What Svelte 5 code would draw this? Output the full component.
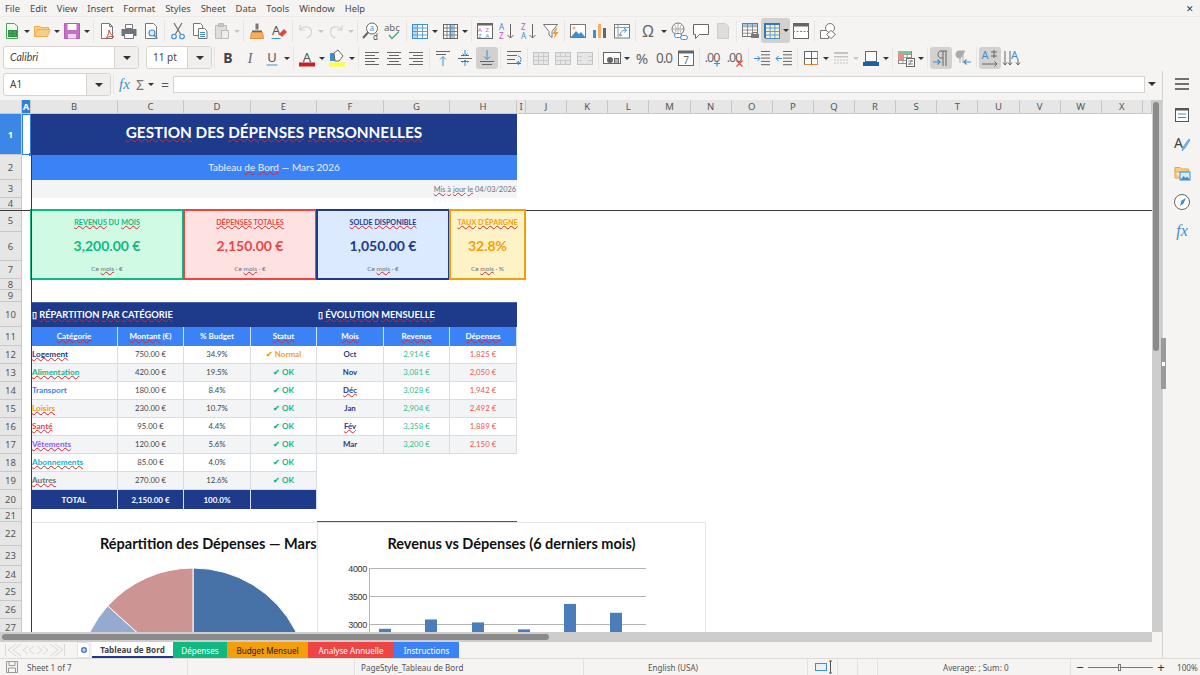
<script>
  const menus = ['File', 'Edit', 'View', 'Insert', 'Format', 'Styles', 'Sheet', 'Data', 'Tools', 'Window', 'Help'];

  const grid = (x, y, w, h, nx, ny, color, fill = '#fff') => {
    let s = `<rect x="${x + .5}" y="${y + .5}" width="${w}" height="${h}" fill="${fill}" stroke="${color}"/><path d="`;
    for (let i = 1; i < nx; i++) s += `M${x + .5 + (w * i) / nx} ${y}v${h}`;
    for (let i = 1; i < ny; i++) s += `M${x} ${y + .5 + (h * i) / ny}h${w}`;
    return s + `" stroke="${color}" stroke-width=".8" fill="none"/>`;
  };
  const lines = (x, y, widths, step, color = '#666') =>
    `<path d="${widths.map((w, i) => `M${x[i] ?? x[0]} ${y + i * step + .5}h${w}`).join('')}" stroke="${color}" fill="none"/>`;
  const label = (x, y, size, fill, t, extra = '') =>
    `<text x="${x}" y="${y}" font-size="${size}" fill="${fill}" font-family="Noto Sans, sans-serif" ${extra}>${t}</text>`;

  const icons = {
    new: `<path d="M5.500 3.500h8l3 3v12h-11z" fill="#f0f8f0" stroke="#46a455"/>${grid(7, 10, 8, 6, 2, 2, '#2f8f46', '#46a455')}`,
    open: `<path d="M3.500 6.500v10h13l2.500-7h-1.500v-2h-7l-1-1z" fill="#f9cd82" stroke="#eeb055"/><path d="M3.500 16.500l2.500-7h13" fill="none" stroke="#eeb055"/>`,
    save: `<path d="M3.500 3.500h15v15h-15z" fill="#c56fc5" stroke="#b25fb2"/><path d="M6.500 4v6h9V4z" fill="#fff"/><path d="M7 14h8v4.500H7z" fill="#efd5ef"/>`,
    pdf: `<path d="M5.500 3.500h8l3 3v12h-11z" fill="#fff" stroke="#777"/><path d="M13.500 3.500v3h3" fill="none" stroke="#777"/><path d="M10 19c2-4 3-6 3-9 1 3 2 5 5 7-3-1-5-1-8 2z" fill="none" stroke="#e0483d"/>`,
    print: `<path d="M7.500 4.500h7v4h-7z" fill="#fff" stroke="#777"/><path d="M3.500 9h15v7h-15z" fill="#69747e"/><path d="M6.500 13.500h9v5h-9z" fill="#fff" stroke="#777"/>`,
    preview: `<path d="M5.500 3.500h8l3 3v12h-11z" fill="#fff" stroke="#777"/><circle cx="12" cy="13" r="3" fill="#dcecf9" stroke="#3d8fd1" stroke-width="1.200"/><path d="M14 15l3.500 3.500" stroke="#3d8fd1" stroke-width="1.500"/>`,
    cut: `<path d="M7 3l6.500 11M15 3L8.500 14" stroke="#666" stroke-width="1.100" fill="none"/><circle cx="7" cy="16.500" r="2.300" fill="none" stroke="#3d8fd1" stroke-width="1.100"/><circle cx="15" cy="16.500" r="2.300" fill="none" stroke="#3d8fd1" stroke-width="1.100"/>`,
    copy: `<path d="M4.500 3.500h7l2 2v10h-9z" fill="#fff" stroke="#777"/><path d="M9.500 8.500h6l2.500 2.500v7.500H9.500z" fill="#fff" stroke="#777"/><path d="M11 12.500h5M11 14.500h5M11 16.500h5" stroke="#3d8fd1"/>`,
    paste: `<path d="M4.500 5.500h11v13h-11z" fill="#ddd" stroke="#bbb"/><path d="M7.500 3.500h5v3h-5z" fill="#c6c6c6" stroke="#bbb"/><path d="M10.500 10.500h7v8h-7z" fill="#eee" stroke="#bbb"/>`,
    clone: `<path d="M9.500 3.500h3v6h-3z" fill="#777"/><path d="M6 10.500h10v2H6z" fill="#666"/><path d="M5.500 12.500h11l1 6h-13z" fill="#f4b063" stroke="#e2903a"/>`,
    clear: `${label(4, 15, 13, '#555', 'A')}<path d="M3.500 18.500h9" stroke="#3d8fd1"/><path d="M11 14l5-5 3 3-5 5z" fill="#e0483d"/>`,
    undo: `<path d="M5 5v5h5M5.500 10c3-5 11-4 11 2 0 3-2 5-5 6" fill="none" stroke="#d2d2d2" stroke-width="1.200"/>`,
    redo: `<path d="M17 5v5h-5M16.500 10c-3-5-11-4-11 2 0 3 2 5 5 6" fill="none" stroke="#d2d2d2" stroke-width="1.200"/>`,
    find: `<circle cx="12" cy="8.500" r="5.500" fill="#fff" stroke="#666"/><path d="M8 12.500l-5 5.500" stroke="#666" stroke-width="2"/>${label(9.500, 11, 8, '#3d8fd1', 'a')}${label(13, 20, 8, '#555', 'd')}`,
    spell: `${label(2, 11, 9.500, '#666', 'abc')}<path d="M7 15l3 3.500 7-7" fill="none" stroke="#46a87a" stroke-width="1.400"/>`,
    rows: `${grid(3, 4, 15, 14, 3, 4, '#3d8fd1')}<path d="M3 4h5v14H3z" fill="#3d8fd1" opacity=".35"/>`,
    cols: `${grid(4, 4, 14, 14, 4, 4, '#666')}<path d="M10 4h4v14h-4z" fill="#3d8fd1" opacity=".5"/>`,
    sort: `<rect x="3.500" y="3.500" width="15" height="15" fill="#fff" stroke="#666"/><path d="M3 3.500h16v2H3z" fill="#666"/>${label(4, 12, 6, '#c05ac0', 'A')}${label(11.500, 12, 6, '#c05ac0', 'Z')}${label(4, 18, 6, '#3d8fd1', 'Z')}${label(11.500, 18, 6, '#3d8fd1', 'A')}`,
    asc: `${label(3, 10, 8, '#3d8fd1', 'A')}${label(3, 19, 8, '#c05ac0', 'Z')}<path d="M14.500 4v14M11.500 15l3 3 3-3" fill="none" stroke="#666"/>`,
    desc: `${label(3, 10, 8, '#c05ac0', 'Z')}${label(3, 19, 8, '#3d8fd1', 'A')}<path d="M14.500 4v14M11.500 15l3 3 3-3" fill="none" stroke="#666"/>`,
    filter: `<path d="M3.500 4.500h14l-5.500 7v6l-3-2.500v-3.500z" fill="#fff" stroke="#777"/><path d="M16 8l-3.500 6h2.500l-1.500 5 5-7h-3l2-4z" fill="#f09a30"/>`,
    image: `<rect x="3.500" y="4.500" width="15" height="13" fill="#fff" stroke="#777"/><path d="M4 17l5-6 3 3 2-2 4 5z" fill="#3d8fd1"/><circle cx="7" cy="8" r="1.500" fill="#f4b063"/>`,
    chart: `<path d="M4 10h3v8H4z" fill="#3d8fd1"/><path d="M9 4h3v14H9z" fill="#f4b063"/><path d="M14 8h3v10h-3z" fill="#666"/>`,
    pivot: `<rect x="3.500" y="4.500" width="15" height="13.500" fill="#fff" stroke="#777"/><path d="M3.500 7.500h15M7 4.500v13.500" stroke="#999"/><path d="M9 15c1-4 3-5 6-5M13 8l2.500 2-2 2.500M9 16l-1-2M9 16l2-1" fill="none" stroke="#3d8fd1"/>`,
    omega: `<text x="10" y="17" font-size="16" fill="#666" font-family="Liberation Sans, sans-serif" text-anchor="middle">Ω</text>`,
    link: `<circle cx="10" cy="9" r="6" fill="#fff" stroke="#777"/><path d="M4 9h12M10 3v12M6.500 4.500c2 3 2 6 0 9M13.500 4.500c-2 3-2 6 0 9" fill="none" stroke="#999" stroke-width=".8"/><rect x="6.500" y="13.500" width="7" height="4" rx="2" fill="#fff" stroke="#3d8fd1"/><rect x="12.500" y="15.500" width="7" height="4" rx="2" fill="#fff" stroke="#3d8fd1"/>`,
    comment: `<path d="M3.500 4.500h15v10h-9l-4 4v-4h-2z" fill="#fff" stroke="#666"/>`,
    hf: `<path d="M5.500 3.500h8l3 3v12h-11z" fill="#ddd" stroke="#ccc"/>`,
    area: `${grid(3, 3, 15, 13, 3, 4, '#777')}<path d="M3 3h15v3H3z" fill="#3d8fd1" opacity=".5"/><path d="M12 14h8v4h-8z" fill="#777"/><path d="M14 12.500h4v2h-4z" fill="#fff" stroke="#777"/>`,
    freeze: `${grid(4, 4, 14, 14, 3, 4, '#3d8fd1', '#f8efd0')}<path d="M3 3h2v15H3zM3 3h16v2H3z" fill="#2b79bf"/>`,
    split: `<rect x="3.500" y="3.500" width="15" height="15" fill="#fff" stroke="#666"/><path d="M3 3.500h16v3H3z" fill="#666"/><path d="M3 11.500h16" stroke="#3d8fd1" stroke-dasharray="2 1.500"/>`,
    shapes: `<path d="M3.500 10.500h8v8h-8z" fill="#fff" stroke="#777"/><circle cx="13" cy="8" r="4.500" fill="#fff" stroke="#777"/><path d="M14 10.500l4.500 4-4.500 4-4.500-4z" fill="#fff" stroke="#777"/>`,
    bold: label(11, 16, 14, '#444', 'B', 'text-anchor="middle" font-weight="700"'),
    italic: `<text x="11" y="16" font-size="14" fill="#666" font-family="Liberation Serif, serif" font-style="italic" text-anchor="middle">I</text>`,
    under: `${label(11, 15, 13, '#555', 'U', 'text-anchor="middle"')}<path d="M5.500 18h11" stroke="#7db4e6" stroke-width="1.500"/>`,
    fcolor: `${label(11, 14.500, 13, '#555', 'A', 'text-anchor="middle"')}<path d="M3 15.500h16v4H3z" fill="#c9211e"/>`,
    hcolor: `<path d="M3 15.500h16v4H3z" fill="#ffff38"/><path d="M4 6h9v8H4z" fill="#3d8fd1"/><path d="M8 6l4-3 5 6-4 5H9z" fill="#fff" stroke="#666"/>`,
    left: lines([4], 5, [14, 10, 14, 10, 14], 3),
    center: lines([4, 6, 4, 6, 4], 5, [14, 10, 14, 10, 14], 3),
    right: lines([4, 8, 4, 8, 4], 5, [14, 10, 14, 10, 14], 3),
    top: `${lines([4], 4, [14, 10], 3)}<path d="M11 19v-9M8 12.500l3-3 3 3" fill="none" stroke="#3d8fd1"/>`,
    vcenter: `<path d="M4 11.500h14" stroke="#666"/><path d="M7 8.500h8M7 14.500h8" stroke="#666"/><path d="M11 3v6M8.500 6.500l2.500 2.500 2.500-2.500M11 19v-6M8.500 15.500l2.500-2.500 2.500 2.500" fill="none" stroke="#3d8fd1"/>`,
    bottom: `${lines([4, 6], 14, [14, 10], 3)}<path d="M11 3v9M8 9.500l3 3 3-3" fill="none" stroke="#3d8fd1"/>`,
    wrap: `${lines([4], 4, [14, 10, 8, 14], 4)}<path d="M15 9c4 0 4 7 0 7h-1M16 14l-2.500 2 2.500 2" fill="none" stroke="#3d8fd1"/>`,
    m1: grid(3, 5, 15, 12, 3, 3, '#c4c4c4', '#e6e6e6'),
    m2: `${grid(3, 5, 15, 12, 3, 3, '#c4c4c4', '#e6e6e6')}<path d="M4 10h14v3H4z" fill="#e6e6e6"/>`,
    m3: `${grid(3, 5, 15, 12, 3, 3, '#c4c4c4', '#e6e6e6')}<path d="M8 6h6v10H8z" fill="#e6e6e6"/>`,
    money: `<rect x="2.500" y="5.500" width="17" height="11" fill="#fff" stroke="#666"/><circle cx="9" cy="13" r="3" fill="#666"/><path d="M13 11h5v6h-5z" fill="#666"/><path d="M14 13h3M14 15h3" stroke="#fff"/>`,
    pct: label(11, 16.500, 15, '#666', '%', 'text-anchor="middle"'),
    num: label(11, 16, 13.500, '#666', '0.0', 'text-anchor="middle" letter-spacing="-1"'),
    date: `<rect x="3.500" y="4.500" width="15" height="14" fill="#fff" stroke="#666"/><path d="M3 3.500h16v3H3z" fill="#666"/>${label(11, 17, 10, '#666', '7', 'text-anchor="middle"')}`,
    adddec: `${label(10, 15, 12.500, '#666', '.00', 'text-anchor="middle" letter-spacing="-1"')}<path d="M15 13.500v6M12 16.500h6" stroke="#3d8fd1" stroke-width="1.200"/>`,
    deldec: `${label(10, 15, 12.500, '#666', '.00', 'text-anchor="middle" letter-spacing="-1"')}<path d="M12.500 13.500l6 6M18.500 13.500l-6 6" stroke="#e0483d" stroke-width="1.200"/>`,
    indent: `${lines([10], 4, [9, 9, 9, 9, 9], 3.300)}<path d="M3 11.500h6M6.500 9l2.500 2.500-2.500 2.500" fill="none" stroke="#3d8fd1"/>`,
    outdent: `${lines([10], 4, [9, 9, 9, 9, 9], 3.300)}<path d="M9 11.500H3M5.500 9L3 11.500 5.500 14" fill="none" stroke="#3d8fd1"/>`,
    borders: `<rect x="4.500" y="4.500" width="13" height="13" fill="#fff" stroke="#e08a2e"/><path d="M11.500 4v14M4 11.500h14" stroke="#666"/><path d="M4.500 4.500h13M4.500 4.500v13" stroke="#666" fill="none"/>`,
    bstyle: `<path d="M4 5h14v2H4zM4 9h14v1.500H4z" fill="#c4c4c4"/><path d="M4 13h14M4 16h14" stroke="#c4c4c4" stroke-dasharray="2 1"/>`,
    bcolor: `<rect x="5.500" y="4.500" width="11" height="10" fill="#fff" stroke="#666"/><path d="M3 15h16v4H3z" fill="#1f5f9e"/>`,
    cond: `${grid(3, 4, 13, 12, 3, 4, '#888')}<path d="M3 4h13v3H3z" fill="#7cc68a"/><path d="M3 7h6v6H3z" fill="#e98d88"/><rect x="11.500" y="11.500" width="8" height="8" fill="#fff" stroke="#666"/><path d="M13 14h5M13 17h5M17 13l-3 5" stroke="#666" stroke-width=".8"/>`,
    ltr: `<path d="M13 4v15M16 4v15" stroke="#666"/><path d="M17 4h-6c-4 0-4 7 0 7h2" fill="none" stroke="#666"/><path d="M3 15h7M7.500 12.500L10 15l-2.500 2.500" fill="none" stroke="#3d8fd1" stroke-width="1.200"/>`,
    rtl: `<path d="M8 4v12M11 4v12" stroke="#aaa"/><path d="M13 4H7c-4 0-4 7 0 7h2" fill="#aaa" stroke="#aaa"/><path d="M19 15h-7M14.500 12.500L12 15l2.500 2.500" fill="none" stroke="#3d8fd1" stroke-width="1.200"/>`,
    horiz: `${label(2.500, 12, 11, '#3d8fd1', 'A')}<path d="M12 5h6M12 9h6M15 3v8" stroke="#666"/><path d="M3 17h15M15.500 14.500L18 17l-2.500 2.500" fill="none" stroke="#666"/>`,
    vert: `${label(10, 12, 11, '#3d8fd1', 'A')}<path d="M4 4v14M9 4v14M17 12v6M2 15.500L4 18l2-2.500M7 15.500L9 18l2-2.500M15 15.500l2 2.500 2-2.500" fill="none" stroke="#666"/>`
  };

  const bar1 = ['new', '>', 'open', '>', 'save', '>', '|', 'pdf', 'print', 'preview', '|', 'cut', 'copy', 'paste', '-', '|', 'clone', 'clear', '|', 'undo', '-', 'redo', '-', '|', 'find', 'spell', '|', 'rows', '>', 'cols', '>', '|', 'sort', 'asc', 'desc', 'filter', '|', 'image', 'chart', 'pivot', '|', 'omega', '>', 'link', 'comment', 'hf', '|', 'area', 'freeze*', '>*', 'split', '|', 'shapes'];
  const bar2 = ['bold', 'italic', 'under', '>', '|', 'fcolor', '>', 'hcolor', '>', '|', 'left', 'center', 'right', '|', 'top', 'vcenter', 'bottom*', '|', 'wrap', '|', 'm1', 'm2', 'm3', '|', 'money', '>', 'pct', 'num', 'date', '|', 'adddec', 'deldec', '|', 'indent', 'outdent', '|', 'borders', '>', 'bstyle', '-', 'bcolor', '>', '|', 'cond', '>', '|', 'ltr*', 'rtl', '|', 'horiz*', 'vert'];

  const side = {
    menu: `<path d="M4 6h14M4 11h14M4 16h14" stroke="#444" stroke-width="1.500"/>`,
    props: `<rect x="4.500" y="4.500" width="13" height="13" fill="#fff" stroke="#555"/><path d="M4 4.500h14v2H4z" fill="#555"/><path d="M7 10h8M7 13.500h8" stroke="#3d8fd1"/>`,
    styles: `${label(3, 15, 14, '#444', 'A')}<path d="M12 14l6-8 1 1-5 8-3 3z" fill="#7db4e6" stroke="#3d8fd1" stroke-width=".6"/>`,
    gallery: `<path d="M4 5.500h5l1.500 1.500h7v3H4z" fill="#f9cd82" stroke="#e8a33d"/><path d="M4 8v8h5" fill="#f9cd82" stroke="#e8a33d"/><rect x="9" y="10" width="10" height="8" fill="#dbe9f6" stroke="#3d8fd1"/><path d="M9.500 18l3-4 2 2 1.500-1.500 3 3.500z" fill="#3d8fd1"/>`,
    nav: `<circle cx="11" cy="11" r="7.500" fill="#fff" stroke="#666"/><path d="M15 7l-2.500 5.500-3.500 2.500 1.500-5.500z" fill="#3d8fd1"/>`,
    fx: `<text x="11" y="16" font-size="16" fill="#3d8fd1" font-family="Liberation Serif, serif" font-style="italic" text-anchor="middle">fx</text>`
  };

  const colLetters = ['A', 'B', 'C', 'D', 'E', 'F', 'G', 'H', 'I', 'J', 'K', 'L', 'M', 'N', 'O', 'P', 'Q', 'R', 'S', 'T', 'U', 'V', 'W', 'X', ''];
  const rowNums = Array.from({ length: 27 }, (_, i) => i + 1);

  // ~word~ marks what the spell checker underlines
  const parts = (s) => s.split('~').map((t, i) => ({ t, wavy: i % 2 === 1 }));

  const kpis = [
    { col: 3, tone: 'green', title: '~REVENUS~ DU ~MOIS~', value: '3,200.00 €', sub: 'Ce ~mois~ · €' },
    { col: 5, tone: 'red', title: '~DÉPENSES~ ~TOTALES~', value: '2,150.00 €', sub: 'Ce ~mois~ · €' },
    { col: 7, tone: 'blue', title: '~SOLDE~ ~DISPONIBLE~', value: '1,050.00 €', sub: 'Ce ~mois~ · €' },
    { col: 9, tone: 'amber', title: "~TAUX~ ~D'ÉPARGNE~", value: '32.8%', sub: 'Ce ~mois~ · %' }
  ];

  const cats = [
    ['~Logement~', '#1e3a8a', '750.00 €', '34.9%', '✔ Normal', 'warn'],
    ['~Alimentation~', '#10b981', '420.00 €', '19.5%', '✔ OK', 'ok'],
    ['Transport', '#3b82f6', '180.00 €', '8.4%', '✔ OK', 'ok'],
    ['~Loisirs~', '#f59e0b', '230.00 €', '10.7%', '✔ OK', 'ok'],
    ['~Santé~', '#ef4444', '95.00 €', '4.4%', '✔ OK', 'ok'],
    ['~Vêtements~', '#8b5cf6', '120.00 €', '5.6%', '✔ OK', 'ok'],
    ['~Abonnements~', '#06b6d4', '85.00 €', '4.0%', '✔ OK', 'ok'],
    ['~Autres~', '#6b7280', '270.00 €', '12.6%', '✔ OK', 'ok']
  ];
  const months = [
    ['Oct', '2,914 €', '1,825 €'],
    ['Nov', '3,081 €', '2,050 €'],
    ['~Déc~', '3,028 €', '1,942 €'],
    ['Jan', '2,904 €', '2,492 €'],
    ['~Fév~', '3,358 €', '1,889 €'],
    ['Mar', '3,200 €', '2,150 €']
  ];

  const cells = [
    { r: 1, c: 3, s: 7, cls: 'title', t: '~GESTION~ DES ~DÉPENSES~ ~PERSONNELLES~' },
    { r: 2, c: 3, s: 7, cls: 'subtitle', t: 'Tableau ~de~ ~Bord~ — Mars 2026' },
    { r: 3, c: 3, s: 7, cls: 'updated', t: '~Mis~ ~à~ ~jour~ ~le~ 04/03/2026' },
    { r: 10, c: 3, s: 4, cls: 'section', t: '▯ ~RÉPARTITION~ ~PAR~ ~CATÉGORIE~' },
    { r: 10, c: 7, s: 3, cls: 'section', t: '▯ ~ÉVOLUTION~ ~MENSUELLE~' },
    ...['~Catégorie~', '~Montant~ (€)', '% Budget', '~Statut~', '~Mois~', '~Revenus~', '~Dépenses~'].map((t, i) => ({ r: 11, c: 3 + i, s: 1, cls: 'th', t })),
    ...cats.flatMap((row, i) => {
      const band = i % 2 ? 'td band' : 'td';
      return [
        { r: 12 + i, c: 3, s: 1, cls: band + ' cat', color: row[1], t: row[0] },
        { r: 12 + i, c: 4, s: 1, cls: band, t: row[2] },
        { r: 12 + i, c: 5, s: 1, cls: band, t: row[3] },
        { r: 12 + i, c: 6, s: 1, cls: band + ' state ' + row[5], t: row[4] }
      ];
    }),
    ...months.flatMap((row, i) => {
      const band = i % 2 ? 'td band' : 'td';
      return [
        { r: 12 + i, c: 7, s: 1, cls: band + ' month', t: row[0] },
        { r: 12 + i, c: 8, s: 1, cls: band + ' income', t: row[1] },
        { r: 12 + i, c: 9, s: 1, cls: band + ' spend', t: row[2] }
      ];
    }),
    ...['TOTAL', '2,150.00 €', '100.0%', ''].map((t, i) => ({ r: 20, c: 3 + i, s: 1, cls: 'total', t })),
    { r: 21, c: 7, s: 3, cls: 'rule', t: '' }
  ];

  // pie geometry: centre and radius are in chart coordinates
  const pie = (from, to) => {
    const cx = 162, cy = 160, r = 115;
    const pt = (p) => {
      const a = (p / 100) * Math.PI * 2;
      return `${(cx + r * Math.sin(a)).toFixed(1)} ${(cy - r * Math.cos(a)).toFixed(1)}`;
    };
    return `M${cx} ${cy}L${pt(from)}A${r} ${r} 0 ${to - from > 50 ? 1 : 0} 1 ${pt(to)}Z`;
  };
  const slices = [
    { d: pie(0, 34.9), fill: '#4672a8' },
    { d: pie(34.9, 70), fill: '#7fa0cc' },
    { d: pie(70, 86.7), fill: '#95aacf' },
    { d: pie(86.7, 100), fill: '#cd9494' }
  ];
  const bars = [
    { x: 61, v: 2914 },
    { x: 107, v: 3081 },
    { x: 154, v: 3028 },
    { x: 200, v: 2904 },
    { x: 246, v: 3358 },
    { x: 292, v: 3200 }
  ];
  const yOf = (v) => 101 - ((v - 3000) / 1000) * 56;
</script>

{#snippet txt(s)}{#each parts(s) as p}{#if p.wavy}<span class="wavy">{p.t}</span>{:else}{p.t}{/if}{/each}{/snippet}

{#snippet toolbar(items)}
  {#each items as item}
    {#if item === '|'}
      <span class="sep"></span>
    {:else if item === '>'}
      <span class="arrow"></span>
    {:else if item === '>*'}
      <span class="arrow held"></span>
    {:else if item === '-'}
      <span class="arrow off"></span>
    {:else}
      <span class="btn" class:pressed={item.endsWith('*')}>
        <svg width="22" height="22" viewBox="0 0 22 22">{@html icons[item.replace('*', '')]}</svg>
      </span>
    {/if}
  {/each}
{/snippet}

<div class="app">
  <div class="menubar">
    {#each menus as m}<span>{m}</span>{/each}
    <span class="close">✕</span>
  </div>

  <div class="toolbar first">{@render toolbar(bar1)}</div>

  <div class="toolbar second">
    <div class="combo font"><span class="value">Calibri</span><span class="drop"></span></div>
    <div class="combo size"><span class="value">11 pt</span><span class="drop"></span></div>
    <span class="sep"></span>
    {@render toolbar(bar2)}
  </div>

  <div class="work">
    <div class="left">
      <div class="formula">
        <div class="combo name"><span class="value">A1</span><span class="drop"></span></div>
        <span class="sep tall"></span>
        <span class="fx">fx</span>
        <span class="sigma">Σ</span>
        <span class="arrow"></span>
        <span class="equals">=</span>
        <div class="input"></div>
        <span class="drop-only"></span>
      </div>

      <div class="sheet-row">
        <div class="sheet">
          <div class="corner"></div>
          {#each colLetters as l, i}
            <div class="colhead" class:active={l === 'A'} style="grid-column: {i + 2}; grid-row: 1">{l}</div>
          {/each}
          {#each rowNums as n}
            <div class="rowhead" class:active={n === 1} style="grid-row: {n + 1}">{n}</div>
          {/each}

          <div class="selected"></div>

          {#each cells as cell}
            <div
              class="cell {cell.cls}"
              style="grid-row: {cell.r + 1}; grid-column: {cell.c} / span {cell.s}{cell.color ? `; color: ${cell.color}` : ''}"
            >
              <span>{@render txt(cell.t)}</span>
            </div>
          {/each}

          {#each kpis as k}
            <div class="kpi {k.tone}" style="grid-column: {k.col} / span 2">
              <div class="kpi-title">{@render txt(k.title)}</div>
              <div class="kpi-value">{k.value}</div>
              <div class="kpi-sub">{@render txt(k.sub)}</div>
            </div>
          {/each}

          <div class="freeze-h"></div>
          <div class="freeze-v"></div>

          <div class="chart pie-chart">
            <div class="chart-title">Répartition des Dépenses — Mars</div>
            <svg class="plot" width="286" height="210" viewBox="0 0 286 210">
              {#each slices as s}
                <path d={s.d} fill={s.fill} stroke="#fff" stroke-width="1"></path>
              {/each}
            </svg>
          </div>

          <div class="chart bar-chart">
            <div class="chart-title">Revenus vs Dépenses (6 derniers mois)</div>
            <svg class="plot" width="388" height="110" viewBox="0 0 388 110">
              {#each [4000, 3500, 3000] as v}
                <path d="M51 {yOf(v) + .5}H328" stroke="#b3b3b3" fill="none"></path>
                <text x="49" y={yOf(v) + 3.500} class="tick" text-anchor="end">{v}</text>
              {/each}
              <path d="M51.500 45V110" stroke="#b3b3b3" fill="none"></path>
              {#each bars as b}
                <rect x={b.x} y={yOf(b.v)} width="12" height={110 - yOf(b.v)} fill="#4a7ebb"></rect>
              {/each}
            </svg>
          </div>
        </div>
        <div class="vscroll"><div class="vthumb"></div></div>
      </div>

      <div class="hscroll"><div class="hthumb"></div></div>

      <div class="tabs">
        <div class="tab-nav">
          <svg width="62" height="16" viewBox="0 0 62 16">
            <path d="M1.500 2v12M12 2L4 8l8 6M17 2L9 8l8 6M24 4l-5 4 5 4M30 4l-5 4 5 4M33 4l5 4-5 4M39 4l5 4-5 4M46 2l8 6-8 6M51 2l8 6-8 6M60.500 2v12" fill="none" stroke="#d8d8d8"></path>
          </svg>
        </div>
        <div class="tab-add">
          <svg width="16" height="16" viewBox="0 0 16 16">
            <path d="M1.500 .5h9l3 3v12h-12z" fill="#fff" stroke="#e2e2e2"></path>
            <circle cx="8" cy="8" r="3" fill="#3f74c4"></circle>
            <path d="M6 8h4M8 6v4" stroke="#fff" stroke-width=".8"></path>
          </svg>
        </div>
        <div class="tab current">Tableau de Bord</div>
        <div class="tab t-green">Dépenses</div>
        <div class="tab t-amber">Budget Mensuel</div>
        <div class="tab t-red">Analyse Annuelle</div>
        <div class="tab t-blue">Instructions</div>
      </div>
    </div>

    <div class="sidebar">
      {#each Object.keys(side) as key}
        <svg class="side-{key}" width="22" height="22" viewBox="0 0 22 22">{@html side[key]}</svg>
      {/each}
      <div class="grip"><span></span></div>
    </div>
  </div>

  <div class="status">
    <div class="st st-sheet">
      <svg width="14" height="14" viewBox="0 0 14 14">
        <path d="M1.500 1.500h11v11h-11z" fill="none" stroke="#999"></path>
        <path d="M4 2v3.500h6V2M3.500 12.500V8h7v4.500" fill="none" stroke="#999"></path>
      </svg>
      <span>Sheet 1 of 7</span>
    </div>
    <div class="st st-empty"></div>
    <div class="st st-style">PageStyle_Tableau de Bord</div>
    <div class="st st-lang">English (USA)</div>
    <div class="st st-mode">
      <svg width="18" height="14" viewBox="0 0 18 14">
        <rect x=".5" y="3.500" width="11" height="7" fill="#e8f1f9" stroke="#3d8fd1"></rect>
        <path d="M14 1h3M15.500 1v12M14 13h3" fill="none" stroke="#555"></path>
      </svg>
    </div>
    <div class="st st-blank"></div>
    <div class="st st-blank"></div>
    <div class="st st-sum">Average: ; Sum: 0</div>
    <div class="st st-zoom">
      <span class="pm">−</span>
      <span class="slider"><span class="thumb"></span></span>
      <span class="pm">+</span>
      <span class="pct">100%</span>
    </div>
  </div>
</div>

<style>
  :global(body) {
    margin: 0;
    background: #f5f4f2;
  }

  .app {
    width: 1200px;
    height: 675px;
    display: flex;
    flex-direction: column;
    overflow: hidden;
    background: #f5f4f2;
    font-family: "Noto Sans", sans-serif;
    color: #444;
  }

  .menubar {
    height: 17px;
    display: flex;
    align-items: center;
    gap: 10px;
    padding-left: 5px;
    font-size: 9.4px;
    color: #4a4a4a;
    box-sizing: border-box;
    border-bottom: 1px solid #ecebe8;
  }

  .close {
    margin-left: auto;
    margin-right: 6px;
    font-size: 9px;
    color: #333;
  }

  .toolbar {
    height: 27px;
    display: flex;
    align-items: center;
    padding-left: 1px;
  }

  .btn {
    width: 22px;
    height: 22px;
    flex: none;
    display: block;
    border-radius: 3px;
  }

  .btn svg {
    display: block;
  }

  .btn.pressed {
    background: #d3d1ce;
  }

  .toolbar.first .btn.pressed {
    height: 25px;
    display: flex;
    align-items: center;
    border-radius: 3px 0 0 3px;
  }

  .sep {
    width: 5px;
    height: 22px;
    flex: none;
    position: relative;
  }

  .sep::after {
    content: "";
    position: absolute;
    left: 2px;
    top: 0;
    bottom: 0;
    width: 1px;
    background: #e8e6e3;
  }

  .arrow {
    width: 8px;
    height: 22px;
    flex: none;
    position: relative;
  }

  .arrow::after {
    content: "";
    position: absolute;
    left: 1px;
    top: 10px;
    border: 3px solid transparent;
    border-top: 3px solid #333;
    border-bottom: 0;
  }

  .arrow.off::after {
    border-top-color: #c6c6c6;
  }

  .arrow.held {
    width: 7px;
    height: 25px;
    background: #d3d1ce;
    border-radius: 0 3px 3px 0;
  }

  .arrow.held::after {
    top: 11px;
    left: 0;
  }

  .combo {
    display: flex;
    height: 23px;
    box-sizing: border-box;
    border: 1px solid #d6d4d1;
    border-radius: 3px;
    background: #fff;
    flex: none;
    overflow: hidden;
  }

  .combo .value {
    flex: 1;
    padding-left: 6px;
    line-height: 21px;
    font-size: 10px;
    color: #444;
  }

  .combo .drop {
    width: 23px;
    background: #f0efed;
    border-left: 1px solid #d6d4d1;
    position: relative;
  }

  .combo .drop::after {
    content: "";
    position: absolute;
    left: 8px;
    top: 9px;
    border: 4px solid transparent;
    border-top: 4px solid #333;
    border-bottom: 0;
  }

  .combo.font {
    width: 136px;
    margin-left: 2px;
  }

  .combo.font .value {
    font-family: Lato, sans-serif;
    font-style: italic;
    font-size: 10.5px;
    padding-left: 6px;
  }

  .combo.size {
    width: 66px;
    margin-left: 7px;
  }

  .work {
    height: 587px;
    display: flex;
  }

  .left {
    width: 1162px;
    display: flex;
    flex-direction: column;
  }

  .formula {
    height: 29px;
    display: flex;
    align-items: center;
    padding: 0 0 3px 3px;
    box-sizing: border-box;
  }

  .combo.name {
    width: 108px;
  }

  .sep.tall {
    height: 20px;
  }

  .fx {
    font-family: "Liberation Serif", serif;
    font-style: italic;
    font-size: 15px;
    color: #3d8fd1;
    width: 17px;
    text-align: center;
  }

  .sigma {
    font-size: 14px;
    color: #777;
    width: 14px;
    text-align: center;
  }

  .equals {
    width: 14px;
    text-align: center;
    font-size: 14px;
    color: #555;
    margin-left: 3px;
  }

  .input {
    width: 972px;
    height: 17px;
    margin-left: 1px;
    background: #fff;
    border: 1px solid #d6d4d1;
    box-sizing: border-box;
  }

  .drop-only {
    margin-left: 3px;
    border: 4px solid transparent;
    border-top: 4px solid #333;
    border-bottom: 0;
  }

  .sheet-row {
    height: 532px;
    display: flex;
  }

  .sheet {
    width: 1152px;
    height: 532px;
    flex: none;
    background: #fff;
    position: relative;
    overflow: hidden;
    display: grid;
    grid-template-columns: 22px 9px 87px 66px 67px 66px 67px 66px 67px 9px repeat(15, 41.13px) 9px;
    grid-template-rows: 14px 41px 25px 18px 11px 23px 29px 18px 11px 12px 25px 19px repeat(8, 18px) 19px 13px 24px 20px 17px 18px 18px 18px;
  }

  .corner {
    grid-row: 1;
    grid-column: 1;
    background: #e6e6e6;
    border-right: 1px solid #c8c8c8;
    border-bottom: 1px solid #c8c8c8;
  }

  .colhead {
    background: #e6e6e6;
    border-right: 1px solid #c8c8c8;
    border-bottom: 1px solid #c8c8c8;
    font-size: 9.5px;
    line-height: 13px;
    text-align: center;
    color: #555;
    overflow: hidden;
  }

  .colhead.active {
    background: #2f7fe0;
    color: #fff;
    font-weight: 700;
  }

  .rowhead {
    grid-column: 1;
    background: #e6e6e6;
    border-right: 1px solid #c8c8c8;
    border-bottom: 1px solid #c8c8c8;
    font-size: 9.5px;
    color: #555;
    display: flex;
    align-items: center;
    justify-content: center;
    overflow: hidden;
  }

  .rowhead.active {
    background: #3b86e6;
    color: #fff;
    font-weight: 700;
  }

  .selected {
    grid-row: 2;
    grid-column: 2;
    box-sizing: border-box;
    border: 1px solid #2f7fe0;
    position: relative;
    z-index: 4;
  }

  .selected::after {
    content: "";
    position: absolute;
    right: -2px;
    bottom: -2px;
    width: 3px;
    height: 3px;
    background: #2f7fe0;
  }

  .cell {
    display: flex;
    align-items: center;
    justify-content: center;
    box-sizing: border-box;
    font-family: Lato, sans-serif;
    white-space: nowrap;
    overflow: hidden;
  }

  .wavy {
    text-decoration: underline wavy #d8262c;
    text-decoration-thickness: 1px;
    text-decoration-skip-ink: none;
    text-underline-offset: 0;
  }

  .title {
    background: #1e3a8a;
    color: #fff;
    font-weight: 700;
    font-size: 15.3px;
    padding-bottom: 5px;
  }

  .subtitle {
    background: #3b82f6;
    color: #e8f0fe;
    font-size: 10px;
    padding-bottom: 2px;
  }

  .updated {
    background: #f3f4f6;
    color: #6b7280;
    font-size: 7.4px;
    justify-content: flex-end;
    padding-right: 1px;
  }

  .section {
    background: #1e3a8a;
    color: #fff;
    font-weight: 700;
    font-size: 9.3px;
    justify-content: flex-start;
    padding: 0 0 2px 1px;
    border-top: 1px solid #4763a8;
  }

  .th {
    background: #3b82f6;
    color: #fff;
    font-weight: 700;
    font-size: 8px;
    border-right: 1px solid #cfe0fb;
    padding-bottom: 1px;
  }

  .td {
    background: #fff;
    color: #444;
    font-size: 7.8px;
    border-right: 1px solid #d9dce1;
    border-bottom: 1px solid #d9dce1;
    padding-bottom: 1px;
  }

  .td.band {
    background: #f3f4f6;
  }

  .cat {
    justify-content: flex-start;
    font-weight: 700;
    padding-left: 1px;
    font-size: 8.2px;
  }

  .state {
    font-weight: 700;
    font-size: 8px;
  }

  .state.warn {
    color: #f59e0b;
  }

  .state.ok {
    color: #10b981;
  }

  .month {
    color: #1e3a8a;
    font-weight: 700;
  }

  .income {
    color: #34c08f;
  }

  .spend {
    color: #ef5555;
  }

  .total {
    background: #1e3a8a;
    color: #fff;
    font-weight: 700;
    font-size: 8px;
    border-right: 1px solid #cfe0fb;
  }

  .rule {
    border-bottom: 1px solid #3a55a5;
  }

  .kpi {
    grid-row: 6 / span 3;
    display: grid;
    grid-template-rows: subgrid;
    box-sizing: border-box;
    border: 2px solid;
    text-align: center;
    font-family: Lato, sans-serif;
    position: relative;
    z-index: 2;
    margin: 0 0 -1px -1px;
    white-space: nowrap;
  }

  .kpi-title {
    font-size: 7.2px;
    font-weight: 700;
    line-height: 23px;
  }

  .kpi-value {
    font-size: 14px;
    font-weight: 700;
    line-height: 27px;
  }

  .kpi-sub {
    font-size: 6.5px;
    color: #6b7280;
    line-height: 15px;
  }

  .kpi.green {
    background: #d1fae5;
    border-color: #10b981;
    color: #10b981;
  }

  .kpi.red {
    background: #fee2e2;
    border-color: #ef4444;
    color: #ef4444;
  }

  .kpi.blue {
    background: #dbeafe;
    border-color: #1e3a8a;
    color: #1e3a8a;
  }

  .kpi.amber {
    background: #fef3c7;
    border-color: #f59e0b;
    color: #f59e0b;
  }

  .freeze-h {
    position: absolute;
    left: 0;
    right: 0;
    top: 110px;
    height: 1px;
    background: #3a3a3a;
    z-index: 1;
  }

  .freeze-v {
    position: absolute;
    left: 31px;
    top: 14px;
    bottom: 0;
    width: 1px;
    background: #3a3a3a;
    z-index: 5;
  }

  .chart {
    position: absolute;
    top: 422px;
    height: 210px;
    background: #fff;
    box-sizing: border-box;
    border-top: 1px solid #e4e4e4;
    overflow: hidden;
    font-family: Lato, sans-serif;
  }

  .pie-chart {
    left: 31px;
    width: 286px;
    z-index: 2;
  }

  .bar-chart {
    left: 317px;
    width: 389px;
    z-index: 3;
    border-left: 1px solid #e4e4e4;
    border-right: 1px solid #e4e4e4;
  }

  .chart-title {
    font-size: 14.5px;
    font-weight: 700;
    color: #111;
    white-space: nowrap;
    line-height: 18px;
    margin-top: 12px;
  }

  .pie-chart .chart-title {
    padding-left: 69px;
  }

  .bar-chart .chart-title {
    text-align: center;
  }

  .plot {
    position: absolute;
    left: 0;
    top: 0;
    overflow: hidden;
  }

  .tick {
    font-family: "Liberation Sans", sans-serif;
    font-size: 9px;
    letter-spacing: -0.3px;
    fill: #333;
  }

  .vscroll {
    width: 10px;
    background: #cdcdcd;
    position: relative;
  }

  .vthumb {
    position: absolute;
    left: 1px;
    width: 6px;
    top: 2px;
    height: 249px;
    border-radius: 3px;
    background: #8a8a8a;
  }

  .hscroll {
    width: 1152px;
    height: 10px;
    background: #cdcdcd;
    position: relative;
  }

  .hthumb {
    position: absolute;
    left: 2px;
    top: 2px;
    bottom: 2px;
    width: 547px;
    border-radius: 3px;
    background: #8a8a8a;
  }

  .tabs {
    height: 16px;
    display: flex;
    font-size: 8.1px;
  }

  .tab-nav {
    width: 66px;
    padding-left: 4px;
    box-sizing: border-box;
  }

  .tab-add {
    width: 26px;
    padding-left: 10px;
    box-sizing: border-box;
  }

  .tab {
    display: flex;
    align-items: center;
    justify-content: center;
    box-sizing: border-box;
    white-space: nowrap;
  }

  .tab.current {
    width: 81px;
    font-weight: 700;
    color: #444;
    background: #fff;
    border-bottom: 2px solid #1e3a8a;
  }

  .t-green {
    width: 54px;
    background: #10b981;
    color: #fff;
  }

  .t-amber {
    width: 81px;
    background: #f59e0b;
    color: #222;
  }

  .t-red {
    width: 86px;
    background: #ef4444;
    color: #fff;
  }

  .t-blue {
    width: 65px;
    background: #3b82f6;
    color: #fff;
  }

  .sidebar {
    width: 38px;
    box-sizing: border-box;
    border-left: 1px solid #d6d4d1;
    display: flex;
    flex-direction: column;
    align-items: center;
    padding-top: 2px;
    position: relative;
  }

  .sidebar svg {
    display: block;
    flex: none;
    margin-bottom: 7px;
  }

  .side-menu {
    margin-bottom: 9px !important;
  }

  .grip {
    position: absolute;
    left: -2px;
    top: 267px;
    width: 5px;
    height: 51px;
    background: #9a9a9a;
    display: flex;
    align-items: center;
    justify-content: center;
  }

  .grip span {
    width: 3px;
    height: 4px;
    background: #fff;
  }

  .status {
    height: 17px;
    display: flex;
    align-items: center;
    box-sizing: border-box;
    border-top: 1px solid #dddbd8;
    font-size: 8.1px;
    color: #555;
  }

  .st {
    height: 100%;
    flex: none;
    box-sizing: border-box;
    display: flex;
    align-items: center;
    border-right: 1px solid #e4e2df;
    white-space: nowrap;
  }

  .st-sheet {
    width: 188px;
    padding-left: 5px;
    gap: 8px;
  }

  .st-empty {
    width: 167px;
  }

  .st-style {
    width: 229px;
    padding-left: 6px;
  }

  .st-lang {
    width: 224px;
    padding-left: 64px;
  }

  .st-mode {
    width: 30px;
    padding-left: 7px;
  }

  .st-blank {
    width: 20px;
  }

  .st-sum {
    width: 193px;
    padding-left: 65px;
  }

  .st-zoom {
    flex: 1;
    border-right: 0;
    padding-left: 5px;
    gap: 4px;
  }

  .pm {
    font-size: 13px;
    color: #333;
    width: 8px;
    text-align: center;
  }

  .slider {
    width: 65px;
    height: 1px;
    background: #777;
    position: relative;
  }

  .thumb {
    position: absolute;
    left: 30px;
    top: -3px;
    width: 3px;
    height: 7px;
    background: #f5f4f2;
    border: 1px solid #777;
    box-sizing: border-box;
  }

  .pct {
    margin-left: 8px;
  }
</style>
